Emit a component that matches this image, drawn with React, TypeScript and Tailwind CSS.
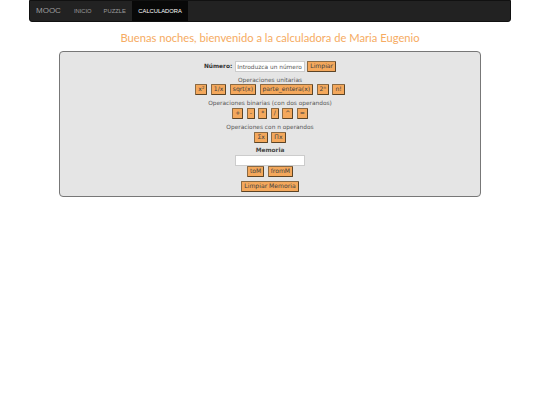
import React from 'react';

const btn =
  "bg-[#f4a85c] border border-[#8a6a44] border-b-[#5c4426] border-r-[#5c4426] text-[#3f3f3f] text-[6.1px] leading-none h-[11px] px-[2px] rounded-[1px] font-['DejaVu_Sans',sans-serif]";

const Btn = ({ children }: { children: React.ReactNode }) => <button className={btn}>{children}</button>;

const Label = ({ children }: { children: React.ReactNode }) => (
  <p className="text-[5.85px] leading-[8px] text-[#555]">{children}</p>
);

export default function App() {
  return (
    <div className="min-h-[405px] bg-white font-['DejaVu_Sans',sans-serif]">
      <nav className="mx-[29px] h-[22px] bg-[#222] border border-[#111] rounded-b-[3px] flex items-stretch font-['Liberation_Sans',sans-serif]">
        <span className="text-[#9d9d9d] text-[8px] flex items-center pl-[6px] pr-[7px]">MOOC</span>
        <span className="text-[#9d9d9d] text-[5.8px] flex items-center px-[6px]">INICIO</span>
        <span className="text-[#9d9d9d] text-[5.8px] flex items-center px-[6px]">PUZZLE</span>
        <span className="text-white text-[5.8px] flex items-center px-[6.5px] bg-[#080808]">CALCULADORA</span>
      </nav>

      <h1 className="mt-[8px] text-center text-[11.2px] leading-[16px] text-[#f6ab62] font-['Lato',cursive]">
        Buenas noches, bienvenido a la calculadora de Maria Eugenio
      </h1>

      <main className="mx-[59px] mt-[5px] h-[146px] bg-[#e5e5e5] border border-[#777] rounded-[4px] flex flex-col items-center pt-[9px]">
        <div className="flex items-center gap-[2px] h-[11px]">
          <label className="text-[5.85px] font-bold text-[#333] mr-[1px]">Número:</label>
          <input
            placeholder="Introduzca un número"
            className="w-[70px] h-[11px] bg-white border border-[#ccc] px-[1px] text-[5.85px] text-[#555] placeholder:text-[#555]"
          />
          <Btn>Limpiar</Btn>
        </div>

        <div className="mt-[4px]"><Label>Operaciones unitarias</Label></div>
        <div className="flex gap-[3.4px]">
          <Btn>x<sup className="text-[4px]">2</sup></Btn>
          <Btn>1/x</Btn>
          <Btn>sqrt(x)</Btn>
          <Btn>parte_entera(x)</Btn>
          <Btn>2<sup className="text-[4px]">n</sup></Btn>
          <Btn>n!</Btn>
        </div>

        <div className="mt-[4px]"><Label>Operaciones binarias (con dos operandos)</Label></div>
        <div className="flex gap-[3.4px] mt-[1px]">
          <Btn>+</Btn>
          <Btn>-</Btn>
          <Btn>*</Btn>
          <Btn>/</Btn>
          <Btn>^</Btn>
          <Btn>=</Btn>
        </div>

        <div className="mt-[4px]"><Label>Operaciones con n operandos</Label></div>
        <div className="flex gap-[3.4px] mt-[1px]">
          <Btn>Σx</Btn>
          <Btn>Πx</Btn>
        </div>

        <p className="mt-[3px] text-[5.85px] leading-[8px] font-bold text-[#444]">Memoria</p>
        <input className="mt-[1px] w-[70px] h-[11px] bg-white border border-[#ccc]" />
        <div className="flex gap-[3.4px]">
          <Btn>toM</Btn>
          <Btn>fromM</Btn>
        </div>
        <div className="flex mt-[4px]"><Btn>Limpiar Memoria</Btn></div>
      </main>
    </div>
  );
}
